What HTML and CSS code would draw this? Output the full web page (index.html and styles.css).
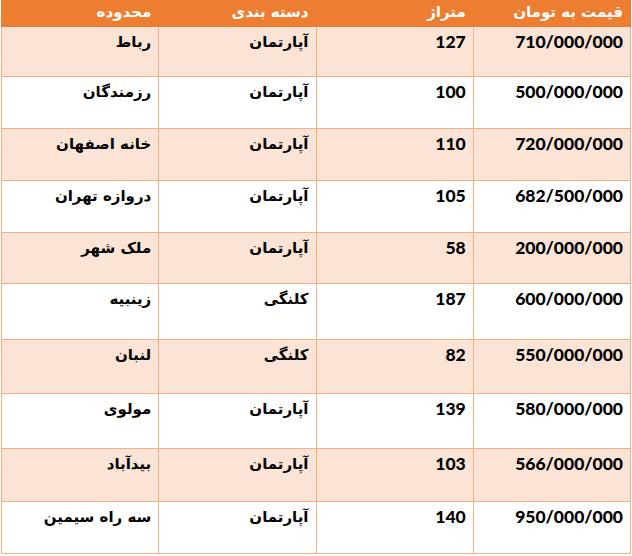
FILE: index.html
```html
<!DOCTYPE html>
<html lang="fa" dir="rtl">
<head>
<meta charset="utf-8">
<link rel="stylesheet" href="styles.css">
</head>
<body>
<table class="prices">
  <thead>
    <tr>
      <th>قیمت به تومان</th>
      <th>متراژ</th>
      <th>دسته بندی</th>
      <th>محدوده</th>
    </tr>
  </thead>
  <tbody>
    <tr><td class="num">710/000/000</td><td class="num">127</td><td>آپارتمان</td><td>رباط</td></tr>
    <tr><td class="num">500/000/000</td><td class="num">100</td><td>آپارتمان</td><td>رزمندگان</td></tr>
    <tr><td class="num">720/000/000</td><td class="num">110</td><td>آپارتمان</td><td>خانه اصفهان</td></tr>
    <tr><td class="num">682/500/000</td><td class="num">105</td><td>آپارتمان</td><td>دروازه تهران</td></tr>
    <tr><td class="num">200/000/000</td><td class="num">58</td><td>آپارتمان</td><td>ملک شهر</td></tr>
    <tr><td class="num">600/000/000</td><td class="num">187</td><td>کلنگی</td><td>زینبیه</td></tr>
    <tr><td class="num">550/000/000</td><td class="num">82</td><td>کلنگی</td><td>لنبان</td></tr>
    <tr><td class="num">580/000/000</td><td class="num">139</td><td>آپارتمان</td><td>مولوی</td></tr>
    <tr><td class="num">566/000/000</td><td class="num">103</td><td>آپارتمان</td><td>بیدآباد</td></tr>
    <tr><td class="num">950/000/000</td><td class="num">140</td><td>آپارتمان</td><td>سه راه سیمین</td></tr>
  </tbody>
</table>
</body>
</html>
```
FILE: styles.css
```css
html, body {
  margin: 0;
  padding: 0;
  background: #ffffff;
}
body {
  font-family: "DejaVu Sans", sans-serif;
}
.prices {
  direction: rtl;
  border-collapse: collapse;
  table-layout: fixed;
  width: 630px;
  margin: 0 1px 0 2px;
}
.prices th,
.prices td {
  border: 1px solid #f4b083;
  text-align: right;
  vertical-align: top;
  padding: 0 7px 0 4px;
  width: 25%;
}
.prices th {
  background: #ed7d31;
  border-color: #ed7d31;
  color: #ffffff;
  font-weight: bold;
  font-size: 15px;
  height: 26px;
  box-sizing: border-box;
  padding-top: 3px;
  border-top: 0;
}
.prices td {
  color: #000000;
  font-weight: bold;
  font-size: 15px;
  padding-top: 6px;
  box-sizing: border-box;
}
.prices td.num {
  font-family: Lato, "Open Sans", sans-serif;
  font-weight: 900;
  font-size: 17.5px;
  padding-top: 4px;
  line-height: 1.2;
}
.prices tbody tr:nth-child(odd) td {
  background: #fbe4d5;
}
.prices tbody tr:nth-child(1) { height: 50px; }
.prices tbody tr:nth-child(2) { height: 52px; }
.prices tbody tr:nth-child(3) { height: 52px; }
.prices tbody tr:nth-child(4) { height: 52px; }
.prices tbody tr:nth-child(5) { height: 51px; }
.prices tbody tr:nth-child(6) { height: 56px; }
.prices tbody tr:nth-child(7) { height: 54px; }
.prices tbody tr:nth-child(8) { height: 55px; }
.prices tbody tr:nth-child(9) { height: 53px; }
.prices tbody tr:nth-child(10) { height: 52px; }
```
